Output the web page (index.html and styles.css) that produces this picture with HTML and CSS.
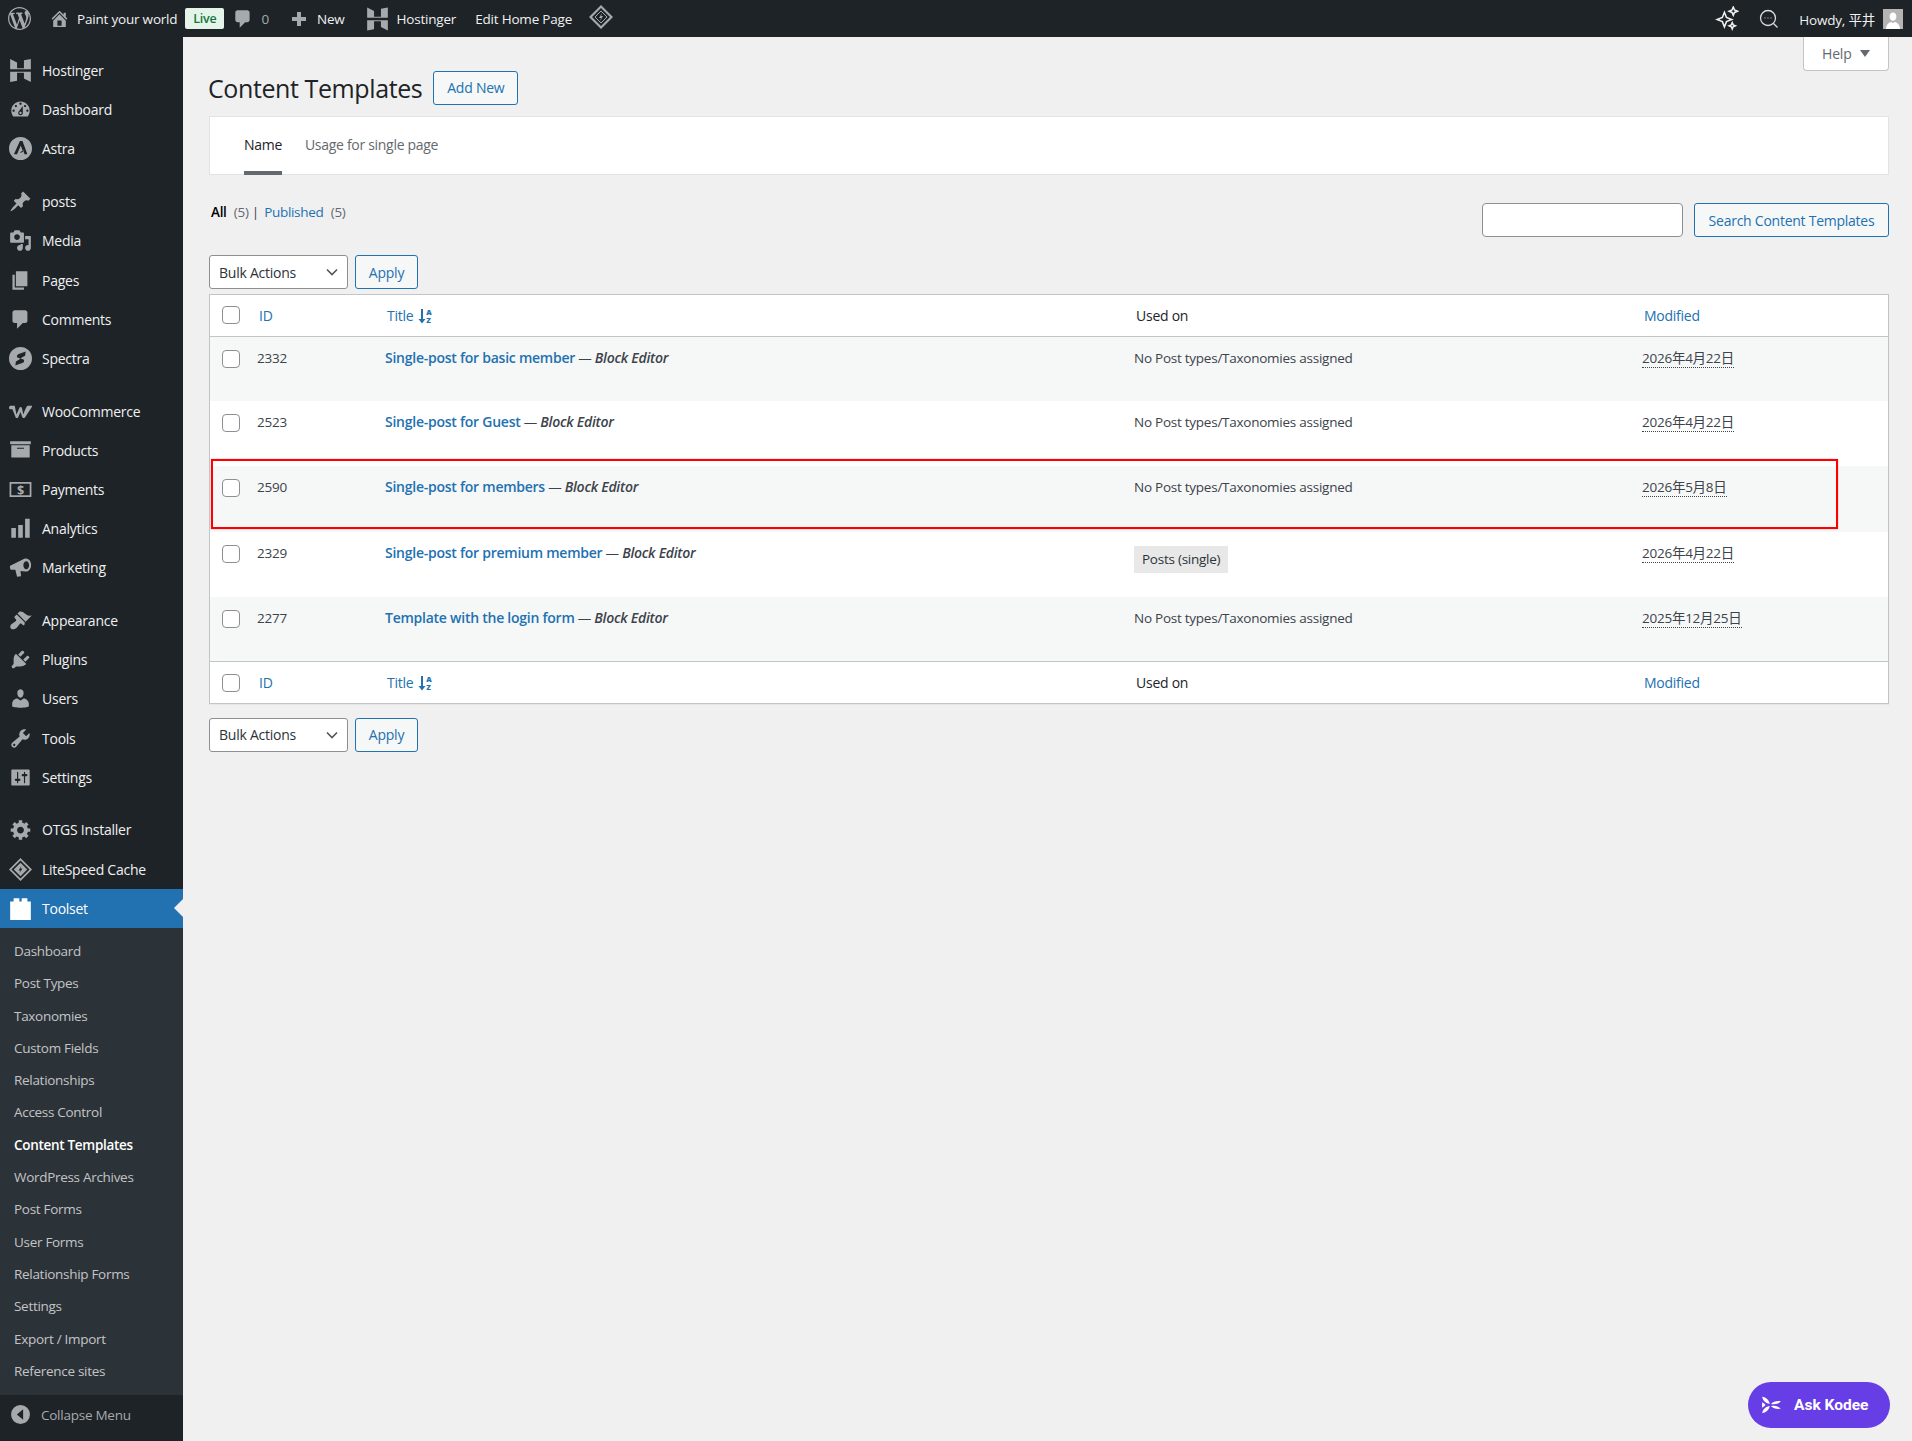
FILE: index.html
```html
<!DOCTYPE html>
<html lang="en">

<head>
    <meta charset="UTF-8">
    <title>Content Templates</title>
    <link rel="stylesheet" href="styles.css">
</head>

<body>

    <header class="adminbar">
        <div class="bar-left">
            <svg class="bar-icon wp-logo" viewBox="0 0 20 20"><path d="M20 10c0-5.51-4.49-10-10-10C4.48 0 0 4.49 0 10c0 5.52 4.48 10 10 10 5.51 0 10-4.48 10-10zM7.78 15.37L4.37 6.22c.55-.02 1.17-.08 1.17-.08.5-.06.44-1.13-.06-1.11 0 0-1.45.11-2.37.11-.18 0-.37 0-.58-.01C4.12 2.69 6.87 1.11 10 1.11c2.33 0 4.45.87 6.05 2.34-.68-.11-1.65.39-1.65 1.58 0 .74.45 1.36.9 2.1.35.61.55 1.36.55 2.46 0 1.49-1.4 5-1.4 5l-3.03-8.37c.54-.02.82-.17.82-.17.5-.05.44-1.25-.06-1.22 0 0-1.44.12-2.38.12-.87 0-2.33-.12-2.33-.12-.5-.03-.56 1.2-.06 1.22l.92.08 1.26 3.41zM17.41 10c.24-.64.74-1.87.43-4.25.7 1.29 1.05 2.71 1.05 4.25 0 3.29-1.73 6.24-4.4 7.78.97-2.59 1.94-5.2 2.92-7.78zM6.1 18.09C3.12 16.65 1.11 13.53 1.11 10c0-1.3.23-2.48.72-3.59C3.25 10.3 4.67 14.2 6.1 18.09zm4.03-6.63l2.58 6.98c-.86.29-1.76.45-2.71.45-.79 0-1.57-.11-2.29-.33.81-2.38 1.62-4.74 2.42-7.1z"/></svg>
            <svg class="bar-icon home-icon" viewBox="0 0 20 20"><path d="M16 8.5l1.53 1.53-1.06 1.06L10 4.62l-6.47 6.47-1.06-1.06L10 2.5l4 4v-2h2v4zm-6-2.46l6 5.99V18H4v-5.97zM12 17v-5H8v5h4z"/></svg>
            <a class="bar-link site-name">Paint your world</a>
            <span class="live-badge">Live</span>
            <svg class="bar-icon comment-icon" viewBox="0 0 20 20"><path d="M5 2h9c1.1 0 2 .9 2 2v7c0 1.1-.9 2-2 2h-2l-5 5v-5H5c-1.1 0-2-.9-2-2V4c0-1.1.9-2 2-2z"/></svg>
            <span class="comment-count">0</span>
            <svg class="bar-icon plus-icon" viewBox="0 0 20 20"><path d="M17 8v4h-5v5H8v-5H3V8h5V3h4v5h5z"/></svg>
            <a class="bar-link new-link">New</a>
            <svg class="bar-icon hostinger-top" viewBox="0 0 20 20"><path d="M1 0l6 3v5h6V1l6-1v9H1zM1 11h18v9l-6-3v-5H7v7l-6 1z"/></svg>
            <a class="bar-link hostinger-link">Hostinger</a>
            <a class="bar-link edit-link">Edit Home Page</a>
            <svg class="bar-icon ls-top" viewBox="0 0 24 24"><path d="M12 0l12 12-12 12L0 12zM12 3L3 12l9 9 9-9z"/><path d="M12 6l6 6-6 6-6-6z" fill="none" stroke="#a7aaad"/><path d="M13 8l-3 5h2l-1 3 3-5h-2z"/></svg>
        </div>
        <div class="bar-right">
            <svg class="spark-icon" viewBox="0 0 24 24" fill="none" stroke="#f0f0f1" stroke-width="1.5"><path d="M10 6l2 5 5 2-5 2-2 5-2-5-5-2 5-2z"/><path d="M18.500 1l1.200 2.800 2.800 1.200-2.800 1.200-1.200 2.800-1.200-2.800-2.800-1.200 2.800-1.200z"/><path d="M17.500 16l.9 2.100 2.100.9-2.100.9-.9 2.100-.9-2.100-2.100-.9 2.100-.9z"/></svg>
            <svg class="chat-icon" viewBox="0 0 20 20" fill="none" stroke="#dcdcde" stroke-width="1.300"><circle cx="9" cy="9" r="7.500"/><path d="M14.500 14.500l4 4"/><path d="M5.500 9h1M8.500 9h1M11.500 9h1" stroke-width="1.200"/></svg>
            <span class="howdy">Howdy, 平井</span>
            <span class="avatar"><svg viewBox="0 0 20 20"><path fill="#fff" d="M10 3.500c2.200 0 3.400 1.800 3.400 3.900 0 2.300-1.400 4.300-3.400 4.300S6.600 9.700 6.600 7.400c0-2.100 1.200-3.900 3.400-3.900zM3 20c0-4 2.500-6.500 5-7l2 1 2-1c2.500.5 5 3 5 7z"/></svg></span>
        </div>
    </header>

    <div class="wrap">
        <nav class="sidebar">
            <ul class="menu">
                <li><svg viewBox="0 0 20 20"><path d="M1 0l6 3v5h6V1l6-1v9H1zM1 11h18v9l-6-3v-5H7v7l-6 1z"/></svg>Hostinger</li>
                <li><svg viewBox="0 0 20 20"><path d="M3.760 16h12.480c1.100-1.370 1.760-3.110 1.760-5 0-4.420-3.580-8-8-8s-8 3.580-8 8c0 1.890.660 3.630 1.760 5zM10 4c.550 0 1 .450 1 1s-.450 1-1 1-1-.450-1-1 .450-1 1-1zM6 6c.550 0 1 .450 1 1s-.450 1-1 1-1-.450-1-1 .450-1 1-1zm8 0c.550 0 1 .450 1 1s-.450 1-1 1-1-.450-1-1 .450-1 1-1zm-5.370 5.550L12 7v6c0 1.100-.9 2-2 2s-2-.9-2-2c0-.570.240-1.080.630-1.450zM4 10c.550 0 1 .450 1 1s-.450 1-1 1-1-.450-1-1 .450-1 1-1zm12 0c.550 0 1 .450 1 1s-.450 1-1 1-1-.450-1-1 .450-1 1-1zm-5 3c0-.550-.450-1-1-1s-1 .450-1 1 .450 1 1 1 1-.450 1-1z"/></svg>Dashboard</li>
                <li><svg viewBox="0 0 20 20"><path fill-rule="evenodd" d="M10 0a10 10 0 1 0 0 20 10 10 0 0 0 0-20zM9.500 3.500h2.200L16 15h-2.500l-1.300-3.600-3 2.600 3-1-.4-1.400-1.600-4.200L7 15H4.300z"/></svg>Astra</li>
                <li class="gap"><svg viewBox="0 0 20 20"><path d="M10.440 3.020l1.820-1.820 6.360 6.350-1.830 1.820c-1.050-.680-2.480-.570-3.410.360l-.750.750c-.920.930-1.040 2.350-.350 3.410l-1.830 1.820-2.410-2.410-2.800 2.790c-.420.420-3.380 2.710-3.800 2.290s1.860-3.390 2.280-3.810l2.790-2.790L4.100 9.360l1.830-1.820c1.050.690 2.480.570 3.400-.360l.750-.750c.930-.920 1.050-2.350.360-3.410z"/></svg>posts</li>
                <li><svg viewBox="0 0 20 20"><path d="M13 11V4c0-.550-.450-1-1-1h-1.670L9 1H5L3.670 3H2c-.550 0-1 .450-1 1v7c0 .550.450 1 1 1h10c.550 0 1-.450 1-1zM7 4.500c1.380 0 2.500 1.120 2.500 2.500S8.380 9.500 7 9.500 4.500 8.380 4.500 7 5.620 4.500 7 4.500zM14 6h5v10.500c0 1.380-1.120 2.500-2.500 2.500S14 17.880 14 16.500s1.120-2.500 2.500-2.500c.170 0 .340.020.500.050V9h-3V6zm-4 8.050V13h2v3.500c0 1.380-1.120 2.500-2.500 2.500S7 17.880 7 16.500 8.120 14 9.500 14c.170 0 .340.020.500.050z"/></svg>Media</li>
                <li><svg viewBox="0 0 20 20"><path d="M6 15V2h10v13H6zm-1 1h8v2H3V5h2v11z"/></svg>Pages</li>
                <li><svg viewBox="0 0 20 20"><path d="M5 2h9c1.100 0 2 .9 2 2v7c0 1.100-.9 2-2 2h-2l-5 5v-5H5c-1.100 0-2-.9-2-2V4c0-1.100.9-2 2-2z"/></svg>Comments</li>
                <li><svg viewBox="0 0 20 20"><path fill-rule="evenodd" d="M10 0a10 10 0 1 0 0 20 10 10 0 0 0 0-20zM14.500 4l-.5 3.500-4 2.200 3 1.300c.5 1.500-.5 2.500-1.500 3L5.500 16l.5-3.500 4-2.200-3-1.300c-.5-1.500.5-2.500 1.500-3z"/></svg>Spectra</li>
                <li class="gap"><svg viewBox="0 0 20 20"><path d="M0 6.500c0-1 .8-1.500 2-1.500h3c.6 3 1 5.500 1.500 7.500L9 7c.5-1.200 2-1.200 2.200 0l1.300 5.500c1-3 2-5.500 3.500-7.500h4.500l-6.500 10c-.7 1-2 1-2.400 0L10 10.500 8 15c-.5 1-1.800 1-2.300 0L3 8H1C.4 8 0 7.400 0 6.500z"/></svg>WooCommerce</li>
                <li><svg viewBox="0 0 20 20"><path d="M19 2v2.500H1V2h18zM2 5.500h16V16H2V5.500zm11 3v-1H7v1h6z"/></svg>Products</li>
                <li><svg viewBox="0 0 20 20"><path fill-rule="evenodd" d="M.5 3.500h19v13H.5zM2 5v10h16V5z"/><text class="dollar" x="10" y="14.500" text-anchor="middle">$</text></svg>Payments</li>
                <li><svg viewBox="0 0 20 20"><path d="M2 9.500h4V18H2zM8 7h4v11H8zM14 1.500h4V18h-4z"/></svg>Analytics</li>
                <li><svg viewBox="0 0 20 20"><path fill-rule="evenodd" d="M1 8.500L12 3c2-1.500 6-1 7 3s-1.500 8-5 7.500l-4-.5.500 4.500-3.500.5-1.500-6L2 12c-1 0-1.500-2.500-1-3.500zM15 4.500c-1.500 0-2.500 1.700-2.500 3.500s1 3.500 2.500 3.500 2.500-1.700 2.500-3.500-1-3.500-2.500-3.500z"/></svg>Marketing</li>
                <li class="gap"><svg viewBox="0 0 20 20"><path d="M14.480 11.060L7.410 3.990l1.500-1.500c.5-.560 2.300-.470 3.510.320 1.210.8 1.430 1.280 2.910 2.100 1.180.640 2.450 1.260 4.450.850zm-.710.710L6.700 4.700 4.930 6.470c-.390.390-.390 1.020 0 1.410l1.060 1.060c.390.390.390 1.030 0 1.420-.6.6-1.430 1.110-2.210 1.690-.350.260-.7.530-1.010.840C1.430 13.230.4 15.700 1.770 17.070s3.840.340 5.200-1.020c.310-.310.580-.660.840-1.010.580-.780 1.090-1.610 1.690-2.210.390-.390 1.020-.390 1.410 0l1.060 1.060c.390.390 1.020.390 1.410 0z"/></svg>Appearance</li>
                <li><svg viewBox="0 0 20 20"><path d="M13.110 4.360L9.870 7.600 8 5.730l3.240-3.240c.350-.340 1.050-.2 1.560.320.520.510.660 1.210.310 1.550zm-8 1.770l.910-1.120 9.010 9.010-1.190.840c-.710.710-2.630 1.160-3.820 1.160H6.140L4.900 17.260c-.590.590-1.540.590-2.120 0-.590-.580-.590-1.530 0-2.120l1.240-1.240v-3.880c0-1.130.4-3.190 1.090-3.890zm7.260 3.970l3.240-3.240c.340-.350 1.040-.210 1.550.310.520.510.660 1.210.310 1.550l-3.240 3.250z"/></svg>Plugins</li>
                <li><svg viewBox="0 0 20 20"><path d="M10 9.250c-2.270 0-2.730-3.440-2.730-3.440C7 4.020 7.820 2 9.970 2c2.160 0 2.980 2.020 2.710 3.810 0 0-.410 3.440-2.680 3.440zm0 2.570L12.720 10c2.390 0 4.520 2.330 4.520 4.530v2.490s-3.650 1.130-7.240 1.130c-3.650 0-7.240-1.130-7.240-1.130v-2.490c0-2.250 1.940-4.480 4.470-4.480z"/></svg>Users</li>
                <li><svg viewBox="0 0 20 20"><path d="M16.680 9.770c-1.340 1.340-3.300 1.670-4.950.990l-5.410 6.520c-.990.990-2.590.990-3.580 0s-.990-2.590 0-3.570l6.520-5.420c-.680-1.650-.350-3.610.990-4.950 1.280-1.280 3.120-1.620 4.720-1.060l-2.890 2.890 2.820 2.820 2.860-2.870c.530 1.580.180 3.390-1.080 4.650zM3.810 16.210c.4.390 1.040.390 1.430 0 .4-.4.4-1.040 0-1.430-.390-.4-1.030-.4-1.430 0-.390.390-.390 1.030 0 1.430z"/></svg>Tools</li>
                <li><svg viewBox="0 0 20 20"><path d="M18 16V4c0-.550-.450-1-1-1H3c-.550 0-1 .450-1 1v12c0 .550.450 1 1 1h14c.550 0 1-.450 1-1zM8 11h1c.550 0 1 .450 1 1s-.450 1-1 1H8v1.500c0 .280-.220.500-.5.500s-.5-.220-.5-.5V13H6c-.550 0-1-.450-1-1s.450-1 1-1h1V5.500c0-.280.220-.5.500-.5s.5.220.5.500V11zm5-2h-1c-.550 0-1-.450-1-1s.450-1 1-1h1V5.500c0-.280.220-.5.500-.5s.5.220.5.500V7h1c.550 0 1 .450 1 1s-.450 1-1 1h-1v5.500c0 .280-.220.500-.5.500s-.5-.220-.5-.5V9z"/></svg>Settings</li>
                <li class="gap"><svg viewBox="0 0 20 20"><path d="M18.500 12h-2.180c-.170.7-.440 1.350-.810 1.930l1.540 1.540-2.100 2.100-1.540-1.540c-.580.360-1.230.630-1.910.790V19h-3v-2.180c-.680-.160-1.330-.430-1.910-.790l-1.540 1.540-2.120-2.120 1.540-1.540c-.360-.580-.630-1.230-.790-1.910H1.500V9.030h2.170c.160-.7.440-1.350.8-1.940L2.930 5.550l2.100-2.100 1.540 1.540c.580-.370 1.240-.640 1.930-.810V2h3v2.180c.680.160 1.330.430 1.910.790l1.540-1.540 2.120 2.120-1.540 1.540c.360.590.640 1.240.8 1.940h2.170V12zM10 13.500c1.660 0 3-1.340 3-3s-1.340-3-3-3-3 1.340-3 3 1.340 3 3 3z"/></svg>OTGS Installer</li>
                <li><svg viewBox="0 0 24 24"><path fill-rule="evenodd" d="M12 0l12 12-12 12L0 12zM12 2.500L2.500 12l9.500 9.500 9.500-9.500z"/><path fill-rule="evenodd" d="M12 5l7 7-7 7-7-7zM13 8l-3 5h2l-1 3 3-5h-2z"/></svg>LiteSpeed Cache</li>
                <li class="current"><svg viewBox="0 0 20 20"><path d="M1 4h3V1h5v3h2V1h5v3h3v16H1z"/></svg>Toolset</li>
            </ul>
            <ul class="submenu">
                <li>Dashboard</li>
                <li>Post Types</li>
                <li>Taxonomies</li>
                <li>Custom Fields</li>
                <li>Relationships</li>
                <li>Access Control</li>
                <li class="sub-current">Content Templates</li>
                <li>WordPress Archives</li>
                <li>Post Forms</li>
                <li>User Forms</li>
                <li>Relationship Forms</li>
                <li>Settings</li>
                <li>Export / Import</li>
                <li>Reference sites</li>
            </ul>
            <div class="collapse"><svg viewBox="0 0 20 20"><path fill-rule="evenodd" d="M10 1a9 9 0 1 1 0 18 9 9 0 0 1 0-18zM12.500 5L6.500 10l6 5z"/></svg>Collapse Menu</div>
        </nav>

        <main class="content">
            <button class="help-tab">Help <span class="help-arrow"></span></button>

            <div class="title-row">
                <h1>Content Templates</h1>
                <a class="btn add-new">Add New</a>
            </div>

            <div class="tabs">
                <a class="tab tab-active">Name</a>
                <a class="tab">Usage for single page</a>
            </div>

            <div class="filter-row">
                <div class="views">
                    <b>All</b> <span class="count">(5)</span> <span class="sep">|</span> <a>Published</a> <span class="count">(5)</span>
                </div>
                <div class="search-box">
                    <input class="search-input" type="text">
                    <a class="btn search-btn">Search Content Templates</a>
                </div>
            </div>

            <div class="actions">
                <div class="bulk-select">Bulk Actions
                    <svg viewBox="0 0 12 8" fill="none" stroke="#50575e" stroke-width="1.600"><path d="M1 1.500l5 5 5-5"/></svg>
                </div>
                <a class="btn apply">Apply</a>
            </div>

            <div class="table-box">
                <table>
                    <colgroup>
                        <col class="col-check">
                        <col class="col-id">
                        <col class="col-title">
                        <col class="col-used">
                        <col>
                    </colgroup>
                    <thead>
                        <tr>
                            <th><span class="cb"></span></th>
                            <th class="sortable">ID</th>
                            <th class="sortable title-head">Title
                                <svg class="sort-icon" viewBox="0 0 16 16"><path d="M3 1h2v10h2.500L4 15.500.5 11H3z"/><text x="8.200" y="7" class="sort-az">A</text><text x="8.200" y="14.600" class="sort-az">Z</text></svg>
                            </th>
                            <th>Used on</th>
                            <th class="sortable">Modified</th>
                        </tr>
                    </thead>
                    <tbody>
                        <tr>
                            <td><span class="cb"></span></td>
                            <td>2332</td>
                            <td><a class="row-title">Single-post for basic member</a> — <em>Block Editor</em></td>
                            <td>No Post types/Taxonomies assigned</td>
                            <td><abbr>2026年4月22日</abbr></td>
                        </tr>
                        <tr>
                            <td><span class="cb"></span></td>
                            <td>2523</td>
                            <td><a class="row-title">Single-post for Guest</a> — <em>Block Editor</em></td>
                            <td>No Post types/Taxonomies assigned</td>
                            <td><abbr>2026年4月22日</abbr></td>
                        </tr>
                        <tr>
                            <td><span class="cb"></span></td>
                            <td>2590</td>
                            <td><a class="row-title">Single-post for members</a> — <em>Block Editor</em></td>
                            <td>No Post types/Taxonomies assigned</td>
                            <td><abbr>2026年5月8日</abbr></td>
                        </tr>
                        <tr>
                            <td><span class="cb"></span></td>
                            <td>2329</td>
                            <td><a class="row-title">Single-post for premium member</a> — <em>Block Editor</em></td>
                            <td><span class="pill">Posts (single)</span></td>
                            <td><abbr>2026年4月22日</abbr></td>
                        </tr>
                        <tr>
                            <td><span class="cb"></span></td>
                            <td>2277</td>
                            <td><a class="row-title">Template with the login form</a> — <em>Block Editor</em></td>
                            <td>No Post types/Taxonomies assigned</td>
                            <td><abbr>2025年12月25日</abbr></td>
                        </tr>
                    </tbody>
                    <tfoot>
                        <tr>
                            <th><span class="cb"></span></th>
                            <th class="sortable">ID</th>
                            <th class="sortable title-head">Title
                                <svg class="sort-icon" viewBox="0 0 16 16"><path d="M3 1h2v10h2.500L4 15.500.5 11H3z"/><text x="8.200" y="7" class="sort-az">A</text><text x="8.200" y="14.600" class="sort-az">Z</text></svg>
                            </th>
                            <th>Used on</th>
                            <th class="sortable">Modified</th>
                        </tr>
                    </tfoot>
                </table>
            </div>

            <div class="actions actions-bottom">
                <div class="bulk-select">Bulk Actions
                    <svg viewBox="0 0 12 8" fill="none" stroke="#50575e" stroke-width="1.600"><path d="M1 1.500l5 5 5-5"/></svg>
                </div>
                <a class="btn apply">Apply</a>
            </div>

            <!-- red box drawn over the third row -->
            <div class="red-box"></div>
        </main>
    </div>

    <a class="kodee">
        <svg viewBox="0 0 20 20"><path d="M1 2.500c3.500.5 6 2.500 7 6.500C4.500 8.500 2 6.500 1 2.500zM1 17.500c1-4 3.500-6 7-6.500-1 4-3.500 6-7 6.500zM1 7.500c1.500 1 2.500 1.500 3 2.500-.5 1-1.500 1.500-3 2.500zM9 9c2-2 5-3 9-2.500-1.500 2-5 3.500-9 2.500zM9 11c4-1 7.500.5 9 2.500-4 .5-7-.5-9-2.500z"/></svg>
        Ask Kodee
    </a>

</body>

</html>
```

FILE: styles.css
```css
* {
    box-sizing: border-box;
}

html,
body {
    height: 100%;
}

body {
    margin: 0;
    background-color: #f0f0f1;
    color: #3c434a;
    font-family: "Open Sans", "Noto Sans CJK JP", sans-serif;
    font-size: 14px;
    overflow: hidden;
}

ul {
    list-style: none;
    margin: 0;
    padding: 0;
}

a {
    color: #2271b1;
    text-decoration: none;
}

/* top bar */
.adminbar {
    height: 37px;
    background-color: #1d2327;
    display: flex;
    justify-content: space-between;
    align-items: center;
    color: #f0f0f1;
    font-size: 13.5px;
    letter-spacing: -0.2px;
}

.bar-left,
.bar-right {
    display: flex;
    align-items: center;
}

.bar-icon {
    fill: #a7aaad;
    flex: none;
}

.bar-link {
    color: #f0f0f1;
}

.wp-logo {
    width: 23px;
    height: 23px;
    margin-left: 8px;
}

.home-icon {
    width: 21px;
    height: 21px;
    margin-left: 18px;
}

.site-name {
    margin-left: 7px;
}

.live-badge {
    background-color: #e5f4e9;
    color: #14763c;
    font-size: 12.5px;
    font-weight: 600;
    height: 21px;
    line-height: 21px;
    width: 39px;
    text-align: center;
    border-radius: 2px;
    margin-left: 8px;
}

.comment-icon {
    width: 22px;
    height: 22px;
    margin-left: 8px;
}

.comment-count {
    color: #a7aaad;
    margin-left: 7px;
}

.plus-icon {
    width: 20px;
    height: 20px;
    margin-left: 20px;
}

.new-link {
    margin-left: 8px;
}

.hostinger-top {
    width: 23px;
    height: 24px;
    margin-left: 21px;
}

.hostinger-link {
    margin-left: 8px;
}

.edit-link {
    margin-left: 19px;
}

.ls-top {
    width: 24px;
    height: 24px;
    margin-left: 17px;
    margin-top: -3px;
}

.spark-icon {
    width: 25px;
    height: 25px;
}

.chat-icon {
    width: 20px;
    height: 20px;
    margin-left: 20px;
}

.howdy {
    margin-left: 20px;
}

.avatar {
    width: 20px;
    height: 20px;
    background-color: #b4b4b4;
    margin: 0 9px 0 8px;
    display: block;
}

.avatar svg {
    display: block;
}

/* left menu */
.wrap {
    display: flex;
    height: calc(100% - 37px);
}

.sidebar {
    width: 183px;
    flex: none;
    background-color: #1d2327;
    padding-top: 14px;
    color: #f0f0f1;
}

.menu li {
    height: 39.2px;
    display: flex;
    align-items: center;
    font-size: 14px;
    letter-spacing: -0.25px;
    position: relative;
}

.menu li svg {
    width: 23px;
    height: 23px;
    margin: 0 10px 0 9px;
    fill: #a7aaad;
    flex: none;
}

.menu .gap {
    margin-top: 13.500px;
}

.menu .current {
    background-color: #2271b1;
    color: #fff;
}

.menu .current svg {
    fill: #fff;
}

.menu .current::after {
    content: "";
    position: absolute;
    right: 0;
    top: 50%;
    margin-top: -9px;
    border: 9px solid transparent;
    border-right-color: #f0f0f1;
    border-left-width: 0;
}

.dollar {
    font-size: 11px;
    font-weight: 700;
    fill: #a7aaad;
}

.submenu {
    background-color: #2c3338;
    padding: 7px 0 8px;
}

.submenu li {
    height: 32.300px;
    line-height: 32.300px;
    padding-left: 14px;
    color: #c3c4c7;
    font-size: 13.500px;
    letter-spacing: -0.3px;
}

.submenu .sub-current {
    color: #fff;
    font-weight: 600;
}

.collapse {
    height: 39px;
    display: flex;
    align-items: center;
    color: #a7aaad;
    font-size: 13.500px;
    letter-spacing: -0.25px;
}

.collapse svg {
    width: 21px;
    height: 21px;
    margin: 0 10px 0 10px;
    fill: #a7aaad;
}

/* main area */
.content {
    flex: 1;
    position: relative;
    padding: 0 23px 0 26px;
}

.help-tab {
    position: absolute;
    top: 0;
    right: 23px;
    width: 86px;
    height: 34px;
    background-color: #fff;
    border: 1px solid #c3c4c7;
    border-top: none;
    border-radius: 0 0 4px 4px;
    color: #646970;
    font-family: inherit;
    font-size: 14px;
    letter-spacing: -0.2px;
    padding: 0;
}

.help-arrow {
    display: inline-block;
    margin-left: 5px;
    vertical-align: 2px;
    border: 5px solid transparent;
    border-top: 7px solid #646970;
    border-bottom: 0;
}

.title-row {
    display: flex;
    align-items: center;
    padding-top: 22px;
    height: 79px;
}

h1 {
    margin: 0 11px 0 -1px;
    font-size: 25px;
    font-weight: 400;
    color: #1d2327;
    letter-spacing: -0.4px;
}

.btn {
    display: flex;
    align-items: center;
    justify-content: center;
    height: 34px;
    border: 1px solid #2271b1;
    border-radius: 3px;
    background-color: #f6f7f7;
    color: #2271b1;
    font-size: 14px;
    letter-spacing: -0.25px;
}

.add-new {
    width: 85px;
}

.tabs {
    height: 59px;
    margin-left: 0;
    background-color: #fff;
    border: 1px solid #e2e3e5;
    display: flex;
    padding-left: 34px;
    gap: 23px;
}

.tab {
    color: #646970;
    height: 58px;
    line-height: 55px;
    font-size: 14px;
    letter-spacing: -0.3px;
}

.tab-active {
    color: #1d2327;
    border-bottom: 4px solid #646970;
}

.filter-row {
    height: 80px;
    display: flex;
    justify-content: space-between;
}

.views {
    margin: 28px 0 0 2px;
    font-size: 13.500px;
    letter-spacing: -0.3px;
}

.views b {
    color: #000;
    font-weight: 600;
}

.views .count {
    color: #646970;
    margin-left: 4px;
}

.views a {
    margin-left: 2px;
}

.search-box {
    display: flex;
    gap: 11px;
    margin-top: 28px;
}

.search-input {
    width: 201px;
    height: 34px;
    border: 1px solid #8c8f94;
    border-radius: 4px;
    background-color: #fff;
}

.search-btn {
    width: 195px;
}

.actions {
    display: flex;
    gap: 7px;
}

.bulk-select {
    width: 139px;
    height: 34px;
    background-color: #fff;
    border: 1px solid #8c8f94;
    border-radius: 3px;
    color: #2c3338;
    font-size: 14px;
    letter-spacing: -0.25px;
    display: flex;
    align-items: center;
    justify-content: space-between;
    padding: 0 9px;
}

.bulk-select svg {
    width: 12px;
    height: 8px;
}

.apply {
    width: 63px;
}

.actions-bottom {
    margin-top: 14px;
}

/* table */
.table-box {
    margin-top: 5px;
    background-color: #fff;
    border: 1px solid #c3c4c7;
    box-shadow: 0 1px 1px rgba(0, 0, 0, 0.04);
}

table {
    width: 100%;
    border-collapse: collapse;
    table-layout: fixed;
}

.col-check {
    width: 38px;
}

.col-id {
    width: 128px;
}

.col-title {
    width: 749px;
}

.col-used {
    width: 508px;
}

th {
    height: 41px;
    padding: 0 0 0 11px;
    text-align: left;
    font-weight: 400;
    font-size: 14px;
    letter-spacing: -0.25px;
    color: #1d2327;
}

thead th {
    border-bottom: 1px solid #c3c4c7;
}

tfoot th {
    border-top: 1px solid #c3c4c7;
}

th.sortable {
    color: #2271b1;
}

.sort-icon {
    width: 16px;
    height: 16px;
    fill: #2271b1;
    vertical-align: -3px;
    margin-left: 1px;
}

.sort-az {
    font-size: 7.500px;
    font-weight: 800;
}

td {
    height: 65.200px;
    padding: 11px 0 0 9px;
    vertical-align: top;
    font-size: 13.500px;
    letter-spacing: -0.25px;
    line-height: 20px;
}

tbody tr:nth-child(odd) {
    background-color: #f6f7f7;
}

th:first-child,
td:first-child {
    padding: 0 0 0 12px;
}

td:first-child {
    padding-top: 13px;
}

.cb {
    display: block;
    width: 18px;
    height: 18px;
    background-color: #fff;
    border: 1px solid #8c8f94;
    border-radius: 4px;
}

.row-title {
    font-weight: 600;
    font-size: 14px;
}

td em {
    font-weight: 600;
    font-size: 14px;
}

abbr {
    border-bottom: 1px dotted #3c434a;
}

.pill {
    display: inline-block;
    margin-top: 3px;
    padding: 0 8px;
    height: 27px;
    line-height: 27px;
    background-color: #e8e8e8;
    color: #2c3338;
}

.red-box {
    position: absolute;
    left: 28px;
    top: 422px;
    width: 1627px;
    height: 70px;
    border: 2px solid #f00;
    box-shadow: 0 0 1px rgba(255, 0, 0, 0.6);
}

/* chat button */
.kodee {
    position: fixed;
    left: 1748px;
    top: 1382px;
    width: 142px;
    height: 46px;
    border-radius: 23px;
    background-color: #673de6;
    color: #fff;
    font-family: Roboto, sans-serif;
    font-weight: 700;
    font-size: 15.500px;
    display: flex;
    align-items: center;
    padding-left: 13px;
    gap: 11px;
}

.kodee svg {
    width: 22px;
    height: 22px;
    fill: #fff;
}
```
